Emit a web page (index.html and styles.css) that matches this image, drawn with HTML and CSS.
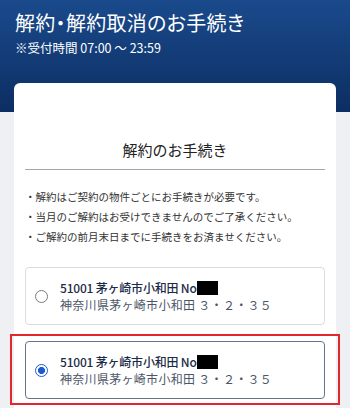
FILE: index.html
```html
<!DOCTYPE html>
<html lang="ja">
<head>
<meta charset="utf-8">
<link rel="stylesheet" href="styles.css">
</head>
<body>
<div class="page">
  <header class="hero">
    <h1 class="hero-title">解約・解約取消のお手続き</h1>
    <p class="hero-sub">※受付時間 07:00 ～ 23:59</p>
  </header>
  <main class="card">
    <h2 class="card-title">解約のお手続き</h2>
    <ul class="notes">
      <li>・解約はご契約の物件ごとにお手続きが必要です。</li>
      <li>・当月のご解約はお受けできませんのでご了承ください。</li>
      <li>・ご解約の前月末日までに手続きをお済ませください。</li>
    </ul>
    <div class="options">
      <label class="option">
        <span class="radio"></span>
        <span class="opt-text">
          <span class="opt-name">51001 茅ヶ崎市小和田 No<span class="redact"></span></span>
          <span class="opt-addr">神奈川県茅ヶ崎市小和田 ３・２・３５</span>
        </span>
      </label>
      <div class="highlight">
        <label class="option selected">
          <span class="radio checked"></span>
          <span class="opt-text">
            <span class="opt-name">51001 茅ヶ崎市小和田 No<span class="redact"></span></span>
            <span class="opt-addr">神奈川県茅ヶ崎市小和田 ３・２・３５</span>
          </span>
        </label>
      </div>
    </div>
  </main>
</div>
</body>
</html>
```

FILE: styles.css
```css
* { box-sizing: border-box; }
html, body { margin: 0; padding: 0; }
body {
  font-family: "Noto Sans CJK JP", "Noto Sans", sans-serif;
  background: #eef0f4;
  width: 350px;
  height: 408px;
  overflow: hidden;
}
.page {
  background: linear-gradient(to bottom, #1a4a8c 0px, #0c2e62 112px, #eef0f4 112px, #eef0f4 100%);
  min-height: 408px;
}
.hero {
  padding: 10px 15px 0;
  height: 83px;
  color: #fff;
}
.hero-title {
  margin: 0;
  font-size: 20px;
  font-weight: 400;
  line-height: 26px;
  font-feature-settings: "palt";
  letter-spacing: 0.3px;
}
.hero-sub {
  margin: 4px 0 0;
  font-size: 12.5px;
  line-height: 16px;
}
.card {
  margin: 0 14px;
  background: #fff;
  border-radius: 6px 6px 0 0;
  padding: 0 11px 20px;
  min-height: 330px;
}
.card-title {
  margin: 0;
  padding: 56px 0 8px;
  font-size: 15px;
  line-height: 22px;
  font-weight: 400;
  text-align: center;
  color: #222;
  border-bottom: 1px solid #a6a6a6;
}
.notes {
  list-style: none;
  margin: 17px 0 0;
  padding: 0;
  font-size: 10.5px;
  line-height: 20px;
  color: #333;
}
.options {
  margin-top: 20px;
  display: flex;
  flex-direction: column;
  gap: 16px;
}
.highlight {
  position: relative;
}
.highlight::after {
  content: "";
  position: absolute;
  left: -15px;
  right: -15px;
  top: -7px;
  bottom: -6px;
  border: 2px solid #e3262b;
  pointer-events: none;
}
.option {
  display: flex;
  align-items: center;
  height: 58px;
  border: 1px solid #d9dce1;
  border-radius: 4px;
  padding: 0 0 0 9px;
  background: #fff;
}
.option.selected {
  border: 1.5px solid #66758c;
}
.radio {
  width: 13px;
  height: 13px;
  border-radius: 50%;
  border: 1px solid #7a7a7a;
  flex: none;
  margin-right: 12px;
  background: #fff;
}
.radio.checked {
  border: 1.5px solid #1a5ccc;
  background: radial-gradient(circle, #1a5ccc 0 3.3px, #fff 3.8px);
}
.opt-text {
  display: flex;
  flex-direction: column;
  font-size: 12px;
  line-height: 17px;
}
.opt-name {
  color: #1c2b48;
  font-weight: 500;
  letter-spacing: -0.2px;
}
.opt-addr {
  color: #4d5669;
  letter-spacing: 0.3px;
}
.redact {
  display: inline-block;
  width: 21px;
  height: 14px;
  background: #000;
  vertical-align: -2px;
}
```
